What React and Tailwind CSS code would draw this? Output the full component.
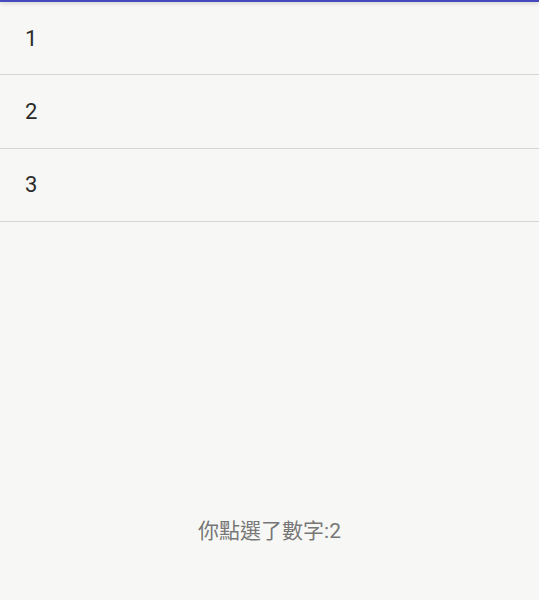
export default function App() {
    const items = ["1", "2", "3"];
    return (
        <div className="w-[539px] h-[600px] bg-[#f7f8f6] flex flex-col font-['Roboto','Noto_Sans_CJK_TC',sans-serif]">
            <div className="h-[2px] bg-[#4649bd] shadow-[0_1px_4px_rgba(0,0,0,0.25)]" />
            <ul className="flex flex-col">
                {items.map((n) => (
                    <li key={n} className="h-[73.3px] flex items-center pl-[25px] text-[22px] text-[#2a2a2a] border-b border-[#d6d6d6]">
                        {n}
                    </li>
                ))}
            </ul>
            <div className="flex-1" />
            <p className="text-center text-[21px] text-[#777] mb-[53px]">你點選了數字:2</p>
        </div>
    );
}
